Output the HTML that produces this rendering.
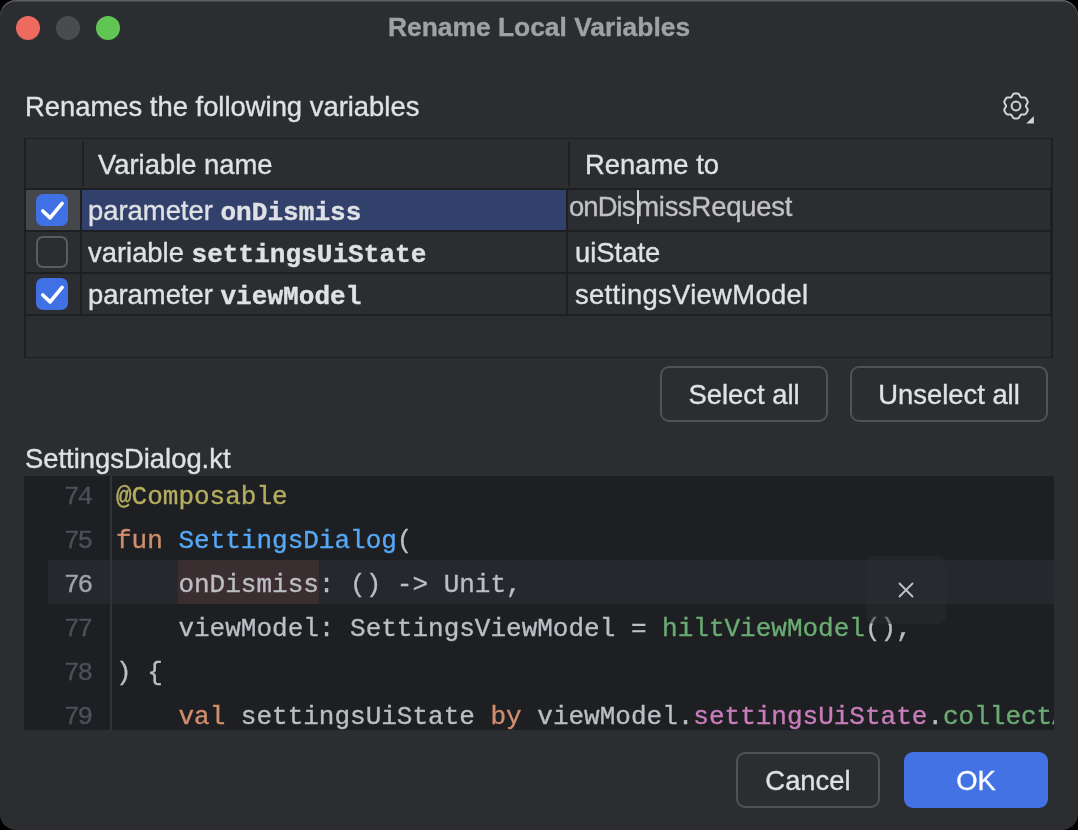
<!DOCTYPE html>
<html><head><meta charset="utf-8"><style>
html,body{margin:0;padding:0;background:#000;width:1078px;height:830px;overflow:hidden}
#win{position:absolute;left:0;top:0;width:1078px;height:830px;background:#2b2d30;border-radius:16px;overflow:hidden;box-shadow:inset 0 1.5px 0 #5d5e61}
#ed{position:absolute;left:24px;top:476px;width:1030px;height:254px;background:#1e1f22;overflow:hidden}
#edin{position:absolute;left:-24px;top:-476px;width:1078px;height:830px}
.r{position:absolute}
.t{position:absolute;white-space:pre;line-height:1;will-change:transform;-webkit-text-stroke:0.35px currentColor}
.btn{will-change:transform;-webkit-text-stroke:0.35px currentColor;font-family:'Liberation Sans', sans-serif;font-size:27.4px;color:#dfe1e5;text-align:center}
</style></head><body>
<div id="win">
<div class="r" style="left:16px;top:16px;width:24px;height:24px;border-radius:50%;background:#ec6a5e"></div>
<div class="r" style="left:56px;top:16px;width:24px;height:24px;border-radius:50%;background:#4a4b4e"></div>
<div class="r" style="left:96px;top:16px;width:24px;height:24px;border-radius:50%;background:#61c554"></div>
<div class="t" style="left:0;width:1078px;text-align:center;top:13.65px;font-family:'Liberation Sans', sans-serif;font-size:26.4px;font-weight:700;color:#a0a1a4">Rename Local Variables</div>
<div class="t" style="left:24.50px;top:92.80px;font-family:'Liberation Sans', sans-serif;font-size:27.4px;color:#dfe1e5;font-weight:400;">Renames the following variables</div>
<svg class="r" style="left:996px;top:86px" width="42" height="42" viewBox="0 0 42 42">
<g transform="translate(20,20)" fill="none" stroke="#d2d3d6" stroke-width="2" stroke-linejoin="round">
<path id="gear" d="M-3.08 -11.47 Q-2.53 -12.42 -1.43 -12.42 L1.43 -12.42 Q2.53 -12.42 3.08 -11.47 L4.40 -9.18 Q4.85 -8.40 5.75 -8.40 L8.39 -8.40 Q9.49 -8.40 10.04 -7.45 L11.47 -4.97 Q12.02 -4.02 11.47 -3.07 L10.15 -0.78 Q9.70 0.00 10.15 0.78 L11.47 3.07 Q12.02 4.02 11.47 4.97 L10.04 7.45 Q9.49 8.40 8.39 8.40 L5.75 8.40 Q4.85 8.40 4.40 9.18 L3.08 11.47 Q2.53 12.42 1.43 12.42 L-1.43 12.42 Q-2.53 12.42 -3.08 11.47 L-4.40 9.18 Q-4.85 8.40 -5.75 8.40 L-8.39 8.40 Q-9.49 8.40 -10.04 7.45 L-11.47 4.97 Q-12.02 4.02 -11.47 3.07 L-10.15 0.78 Q-9.70 0.00 -10.15 -0.78 L-11.47 -3.07 Q-12.02 -4.02 -11.47 -4.97 L-10.04 -7.45 Q-9.49 -8.40 -8.39 -8.40 L-5.75 -8.40 Q-4.85 -8.40 -4.40 -9.18 Z"/>
<circle cx="0" cy="0" r="4.4"/>
</g>
<path d="M30.2 37.6 L37.9 30 L37.9 37.6 Z" fill="#d2d3d6"/>
</svg>
<div class="r" style="left:24px;top:138px;width:1029px;height:220px;background:#1e1f22;"></div>
<div class="r" style="left:26px;top:139px;width:1025px;height:49px;background:#2b2d30;"></div>
<div class="r" style="left:82px;top:142px;width:2px;height:44px;background:#1e1f22;"></div>
<div class="r" style="left:568px;top:142px;width:2px;height:44px;background:#1e1f22;"></div>
<div class="t" style="left:98.00px;top:150.80px;font-family:'Liberation Sans', sans-serif;font-size:27.4px;color:#dfe1e5;font-weight:400;">Variable name</div>
<div class="t" style="left:584.60px;top:150.80px;font-family:'Liberation Sans', sans-serif;font-size:27.4px;color:#dfe1e5;font-weight:400;">Rename to</div>
<div class="r" style="left:26px;top:190px;width:54px;height:40px;background:#46474b;"></div>
<div class="r" style="left:82px;top:190px;width:484px;height:40px;background:#32416b;"></div>
<div class="r" style="left:568px;top:190px;width:482px;height:40px;background:#2b2d30;"></div>
<div class="r" style="left:26px;top:232px;width:54px;height:40px;background:#2b2d30;"></div>
<div class="r" style="left:82px;top:232px;width:484px;height:40px;background:#2b2d30;"></div>
<div class="r" style="left:568px;top:232px;width:482px;height:40px;background:#2b2d30;"></div>
<div class="r" style="left:26px;top:274px;width:54px;height:40px;background:#2b2d30;"></div>
<div class="r" style="left:82px;top:274px;width:484px;height:40px;background:#2b2d30;"></div>
<div class="r" style="left:568px;top:274px;width:482px;height:40px;background:#2b2d30;"></div>
<div class="r" style="left:26px;top:316px;width:1025px;height:41px;background:#2b2d30;"></div>
<div class="r" style="left:36px;top:194px;width:32px;height:32px;border-radius:7px;background:#3f71e5"><svg width="32" height="32" viewBox="0 0 32 32"><path d="M6.8 17 L14.1 23.9 L26.1 9.3" fill="none" stroke="#fff" stroke-width="3.6" stroke-linecap="round" stroke-linejoin="round"/></svg></div>
<div class="r" style="left:36px;top:236px;width:32px;height:32px;box-sizing:border-box;border:2px solid #5a5c60;border-radius:7px"></div>
<div class="r" style="left:36px;top:278px;width:32px;height:32px;border-radius:7px;background:#3f71e5"><svg width="32" height="32" viewBox="0 0 32 32"><path d="M6.8 17 L14.1 23.9 L26.1 9.3" fill="none" stroke="#fff" stroke-width="3.6" stroke-linecap="round" stroke-linejoin="round"/></svg></div>
<div class="t" style="left:88.3px;top:196.50px;font-family:'Liberation Sans', sans-serif;font-size:27.4px;color:#dfe1e5">parameter <span style="font-family:'Liberation Mono', monospace;font-weight:700;font-size:26.1px">onDismiss</span></div>
<div class="t" style="left:88.3px;top:238.50px;font-family:'Liberation Sans', sans-serif;font-size:27.4px;color:#dfe1e5">variable <span style="font-family:'Liberation Mono', monospace;font-weight:700;font-size:26.1px">settingsUiState</span></div>
<div class="t" style="left:88.3px;top:280.50px;font-family:'Liberation Sans', sans-serif;font-size:27.4px;color:#dfe1e5">parameter <span style="font-family:'Liberation Mono', monospace;font-weight:700;font-size:26.1px">viewModel</span></div>
<div class="t" style="left:569.00px;top:192.60px;font-family:'Liberation Sans', sans-serif;font-size:27.4px;color:#c0c1c5;font-weight:400;"><span style="letter-spacing:-0.9px">onDis</span><span style="letter-spacing:-0.2px;margin-left:1.6px">missRequest</span></div>
<div class="r" style="left:637px;top:190px;width:2px;height:34px;background:#ced0d6;"></div>
<div class="t" style="left:575.00px;top:238.50px;font-family:'Liberation Sans', sans-serif;font-size:27.4px;color:#dfe1e5;font-weight:400;">uiState</div>
<div class="t" style="left:575.00px;top:280.50px;font-family:'Liberation Sans', sans-serif;font-size:27.4px;color:#dfe1e5;font-weight:400;letter-spacing:0.33px">settingsViewModel</div>
<div class="r btn" style="left:660px;top:366px;width:168px;height:56px;box-sizing:border-box;border:2px solid #505256;border-radius:9px;line-height:54px;">Select all</div>
<div class="r btn" style="left:850px;top:366px;width:198px;height:56px;box-sizing:border-box;border:2px solid #505256;border-radius:9px;line-height:54px;">Unselect all</div>
<div class="r btn" style="left:736px;top:752px;width:144px;height:56px;box-sizing:border-box;border:2px solid #505256;border-radius:9px;line-height:54px;">Cancel</div>
<div class="r btn" style="left:904px;top:752px;width:144px;height:56px;background:#4272e3;border-radius:9px;line-height:58px;color:#fff;">OK</div>
<div class="t" style="left:25.00px;top:444.60px;font-family:'Liberation Sans', sans-serif;font-size:27.4px;color:#dfe1e5;font-weight:400;">SettingsDialog.kt</div>
<div id="ed"><div id="edin">
<div class="r" style="left:48px;top:560px;width:1006px;height:44px;background:#26282e;"></div>
<div class="r" style="left:110px;top:476px;width:2px;height:254px;background:#313337;"></div>
<div class="r" style="left:178px;top:560px;width:141px;height:44px;background:#3b2e30;"></div>
<div class="t" style="left:63.80px;top:483.88px;font-family:'Liberation Mono', monospace;font-size:26.0px;color:#4b5059;font-weight:400;letter-spacing:-2px">74</div>
<div class="t" style="left:63.80px;top:527.88px;font-family:'Liberation Mono', monospace;font-size:26.0px;color:#4b5059;font-weight:400;letter-spacing:-2px">75</div>
<div class="t" style="left:63.80px;top:571.88px;font-family:'Liberation Mono', monospace;font-size:26.0px;color:#a1a3ab;font-weight:400;letter-spacing:-2px">76</div>
<div class="t" style="left:63.80px;top:615.88px;font-family:'Liberation Mono', monospace;font-size:26.0px;color:#4b5059;font-weight:400;letter-spacing:-2px">77</div>
<div class="t" style="left:63.80px;top:659.88px;font-family:'Liberation Mono', monospace;font-size:26.0px;color:#4b5059;font-weight:400;letter-spacing:-2px">78</div>
<div class="t" style="left:63.80px;top:703.88px;font-family:'Liberation Mono', monospace;font-size:26.0px;color:#4b5059;font-weight:400;letter-spacing:-2px">79</div>
<div class="t" style="left:116.00px;top:483.88px;font-family:'Liberation Mono', monospace;font-size:26.0px;color:#bcbec4;font-weight:400;"><span style="color:#b3ae60">@Composable</span></div>
<div class="t" style="left:116.00px;top:527.88px;font-family:'Liberation Mono', monospace;font-size:26.0px;color:#bcbec4;font-weight:400;"><span style="color:#cf8e6d">fun</span> <span style="color:#56a8f5">SettingsDialog</span>(</div>
<div class="t" style="left:116.00px;top:571.88px;font-family:'Liberation Mono', monospace;font-size:26.0px;color:#bcbec4;font-weight:400;">    onDismiss: () -&gt; Unit,</div>
<div class="t" style="left:116.00px;top:615.88px;font-family:'Liberation Mono', monospace;font-size:26.0px;color:#bcbec4;font-weight:400;">    viewModel: SettingsViewModel = <span style="color:#6aab73">hiltViewModel</span>(),</div>
<div class="t" style="left:116.00px;top:659.88px;font-family:'Liberation Mono', monospace;font-size:26.0px;color:#bcbec4;font-weight:400;">) {</div>
<div class="t" style="left:116.00px;top:703.88px;font-family:'Liberation Mono', monospace;font-size:26.0px;color:#bcbec4;font-weight:400;">    <span style="color:#cf8e6d">val</span> settingsUiState <span style="color:#cf8e6d">by</span> viewModel.<span style="color:#c77dbb">settingsUiState</span>.<span style="color:#6aab73">collectAsState</span>()</div>
<div class="r" style="left:866px;top:556px;width:80px;height:68px;border-radius:8px;background:rgba(42,43,48,0.5)">
<svg style="position:absolute;left:32px;top:26px" width="16" height="16" viewBox="0 0 16 16"><path d="M1 1 L15 15 M15 1 L1 15" stroke="#c3c4c7" stroke-width="1.8"/></svg></div>
</div></div>
</div>
</body></html>
